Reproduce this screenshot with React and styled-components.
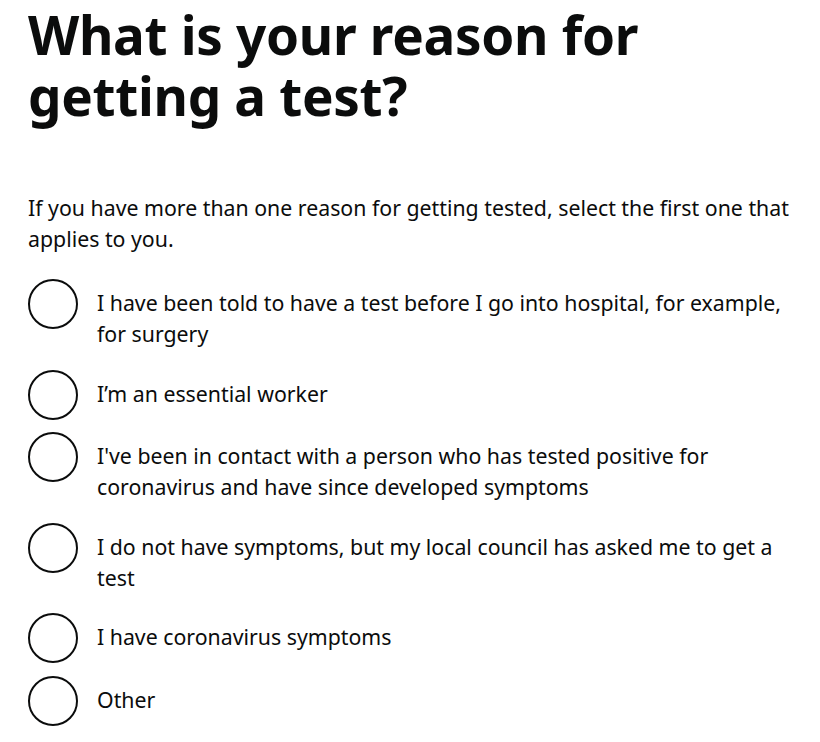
import React from "react";
import styled, { createGlobalStyle } from "styled-components";

const Global = createGlobalStyle`
  html, body { margin: 0; padding: 0; background: #ffffff; }
  body { font-family: "Noto Sans", Roboto, Arial, sans-serif; color: #0b0c0c; }
  * { box-sizing: border-box; }
`;

const Page = styled.main`
  padding: 4px 14px 0 28px;
`;

const Heading = styled.h1`
  margin: 0 0 66px 0;
  font-size: 53px;
  line-height: 61px;
  font-weight: 700;
  letter-spacing: -0.3px;
  max-width: 670px;
`;

const Hint = styled.p`
  margin: 0 0 25px 0;
  font-size: 21.3px;
  line-height: 31px;
  font-weight: 400;
`;

const Fieldset = styled.fieldset`
  margin: 0;
  padding: 0;
  border: 0;
`;

const Item = styled.label`
  display: flex;
  align-items: flex-start;
  min-height: 50px;
  margin-bottom: 12.5px;
  cursor: pointer;
`;

const HiddenInput = styled.input`
  position: absolute;
  opacity: 0;
  width: 1px;
  height: 1px;
  margin: 0;
`;

const Circle = styled.span`
  flex: 0 0 50px;
  width: 50px;
  height: 50px;
  border: 2.5px solid #0b0c0c;
  border-radius: 50%;
  background: #ffffff;
`;

const LabelText = styled.span`
  padding: 8px 0 8px 19px;
  font-size: 21.3px;
  line-height: 31px;
`;

const options = [
  "I have been told to have a test before I go into hospital, for example, for surgery",
  "I’m an essential worker",
  "I've been in contact with a person who has tested positive for coronavirus and have since developed symptoms",
  "I do not have symptoms, but my local council has asked me to get a test",
  "I have coronavirus symptoms",
  "Other",
];

export default function App() {
  return (
    <>
      <Global />
      <Page>
        <Heading>What is your reason for getting a test?</Heading>
        <Hint>
          If you have more than one reason for getting tested, select the first one that applies to you.
        </Hint>
        <Fieldset>
          {options.map((o, i) => (
            <Item key={i}>
              <HiddenInput type="radio" name="reason" value={i} />
              <Circle />
              <LabelText>{o}</LabelText>
            </Item>
          ))}
        </Fieldset>
      </Page>
    </>
  );
}
